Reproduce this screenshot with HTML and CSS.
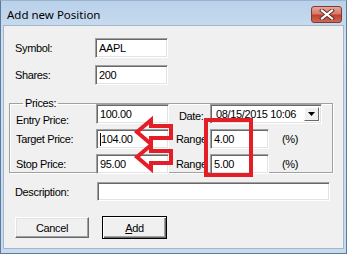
FILE: index.html
```html
<!DOCTYPE html>
<html lang="en">
<head>
    <meta charset="UTF-8">
    <title>Add new Position</title>
    <link rel="stylesheet" href="styles.css">
</head>
<body>
    <div class="window">
        <div class="titlebar">
            <span class="title">Add new Position</span>
            <div class="close">
                <svg width="16" height="11" viewBox="0 0 16 11">
                    <path d="M3 1.5 L13 9.5 M13 1.5 L3 9.5" stroke="#5a2a26" stroke-width="4" stroke-linecap="square"/>
                    <path d="M3 1.5 L13 9.5 M13 1.5 L3 9.5" stroke="#fff" stroke-width="2.2" stroke-linecap="square"/>
                </svg>
            </div>
        </div>

        <div class="client">
            <div class="row first">
                <span class="label">Symbol:</span>
                <div class="field short">AAPL</div>
            </div>
            <div class="row">
                <span class="label">Shares:</span>
                <div class="field short">200</div>
            </div>

            <fieldset class="group">
                <legend>Prices:</legend>
                <div class="price-grid">
                    <span class="label entry">Entry Price:</span>
                    <div class="field short">100.00</div>
                    <span class="label2 date">Date:</span>
                    <div class="field picker">
                        <span>08/15/2015 10:06</span>
                        <span class="drop"><svg width="7" height="4" viewBox="0 0 7 4"><path d="M0 0 H7 L3.5 4 Z" fill="#000"/></svg></span>
                    </div>

                    <span class="label">Target Price:</span>
                    <div class="field short"><span class="caret"></span>104.00</div>
                    <span class="label2">Range</span>
                    <div class="field range">4.00</div>
                    <span class="pct">(%)</span>

                    <span class="label">Stop Price:</span>
                    <div class="field short">95.00</div>
                    <span class="label2">Range</span>
                    <div class="field range">5.00</div>
                    <span class="pct">(%)</span>
                </div>
            </fieldset>

            <div class="row desc">
                <span class="label">Description:</span>
                <div class="field wide"></div>
            </div>

            <div class="buttons">
                <button class="btn">Cancel</button>
                <button class="btn default"><u>A</u>dd</button>
            </div>
        </div>

        <!-- annotations drawn over the dialog -->
        <svg class="markup" width="347" height="254" viewBox="0 0 347 254">
            <g fill="none" stroke="#e41e26" stroke-width="4" stroke-linejoin="miter">
                <path d="M137 132 L151 120 L151 126 L171 126 L171 138 L151 138 L151 144 Z"/>
                <path d="M137 157 L151 145 L151 151 L171 151 L171 163 L151 163 L151 169 Z"/>
                <rect x="206" y="120" width="45" height="55"/>
            </g>
        </svg>
    </div>
</body>
</html>
```

FILE: styles.css
```css
body {
    margin: 0;
    font-family: "Liberation Sans", Arial, sans-serif;
    font-size: 11px;
    letter-spacing: -0.35px;
    color: #000;
}

.window {
    position: relative;
    width: 347px;
    height: 254px;
    background: linear-gradient(#b9d1ea, #cfe0f2 40px, #c6daf0);
    box-sizing: border-box;
    border: 1px solid #5d7a99;
    border-top-color: #9cb3cc;
    overflow: hidden;
}

.titlebar {
    height: 24px;
    display: flex;
    align-items: center;
    justify-content: space-between;
    padding: 0 4px 0 6px;
}

.title {
    font-family: "Noto Sans", "Open Sans", sans-serif;
    font-size: 11.5px;
    letter-spacing: 0;
    color: #000;
    margin-top: 3px;
}

.close {
    width: 31px;
    height: 17px;
    margin-top: 3px;
    box-sizing: border-box;
    border: 1px solid #7b3a33;
    border-radius: 3px;
    background: linear-gradient(#e8a597, #d47a6b 45%, #c0402e 55%, #d06a57);
    display: flex;
    align-items: center;
    justify-content: center;
}

.client {
    margin: 0 2px 0 2px;
    height: 224px;
    background: #f0f0f0;
    border: 1px solid #a4b6ca;
    box-sizing: border-box;
    padding: 12px 0 0 11px;
}

.row {
    display: flex;
    align-items: center;
    margin-top: 7px;
}

.row.first {
    margin-top: 0;
}

.label {
    width: 80px;
    flex: none;
}

.field {
    height: 20px;
    box-sizing: border-box;
    background: #fff;
    border: 1px solid;
    border-color: #a0a0a0 #fff #fff #a0a0a0;
    box-shadow: inset 1px 1px #696969, inset -1px -1px #e3e3e3;
    padding: 0 0 0 3px;
    display: flex;
    align-items: center;
    white-space: nowrap;
}

.short {
    width: 73px;
}

.wide {
    width: 233px;
    height: 19px;
}

.group {
    margin: 12px 0 0 -6px;
    width: 324px;
    height: 76px;
    box-sizing: border-box;
    padding: 0 0 0 6px;
    border: 1px solid #a0a0a0;
    box-shadow: inset 1px 1px #fff, 1px 1px #fff;
}

.group legend {
    padding: 0 2px;
    margin-left: 7px;
    line-height: 12px;
}

.price-grid {
    display: grid;
    grid-template-columns: 80px 73px 41px 59px 53px;
    grid-template-rows: 20px 20px 20px;
    row-gap: 5px;
    margin-top: -5px;
}

.price-grid .label {
    width: auto;
    align-self: center;
}

.price-grid .entry {
    align-self: end;
    margin-bottom: -2px;
}

.label2 {
    padding-left: 7px;
    align-self: center;
    white-space: nowrap;
    overflow: hidden;
}

.label2.date {
    padding-left: 10px;
    align-self: start;
    margin-top: 6px;
}

.picker {
    grid-column: 4 / span 2;
    width: 112px;
    justify-content: space-between;
    padding: 0 2px 0 5px;
}

.drop {
    width: 15px;
    height: 14px;
    box-sizing: border-box;
    background: #f0f0f0;
    border: 1px solid;
    border-color: #fff #696969 #696969 #fff;
    display: flex;
    align-items: center;
    justify-content: center;
}

.range {
    width: 59px;
}

.pct {
    padding-left: 13px;
    align-self: center;
}

.caret {
    width: 1px;
    height: 13px;
    background: #000;
}

.desc {
    margin-top: 9px;
}

.desc .label {
    width: 82px;
}

.buttons {
    display: flex;
    align-items: flex-start;
    gap: 13px;
    margin-top: 15px;
}

.btn {
    font-family: "Liberation Sans", Arial, sans-serif;
    font-size: 11px;
    letter-spacing: -0.35px;
    width: 74px;
    height: 21px;
    margin-top: 1px;
    background: #f0f0f0;
    border: 1px solid;
    border-color: #fff #696969 #696969 #fff;
    box-shadow: inset -1px -1px #a0a0a0, inset 1px 1px #e3e3e3;
    padding: 0;
    color: #000;
}

.btn.default {
    width: 65px;
    height: 23px;
    margin-top: 0;
    border: 1px solid #000;
    box-shadow: inset 1px 1px #fff, inset -1px -1px #696969, inset -2px -2px #a0a0a0;
}

.markup {
    position: absolute;
    left: -1px;
    top: -1px;
    pointer-events: none;
}
```
